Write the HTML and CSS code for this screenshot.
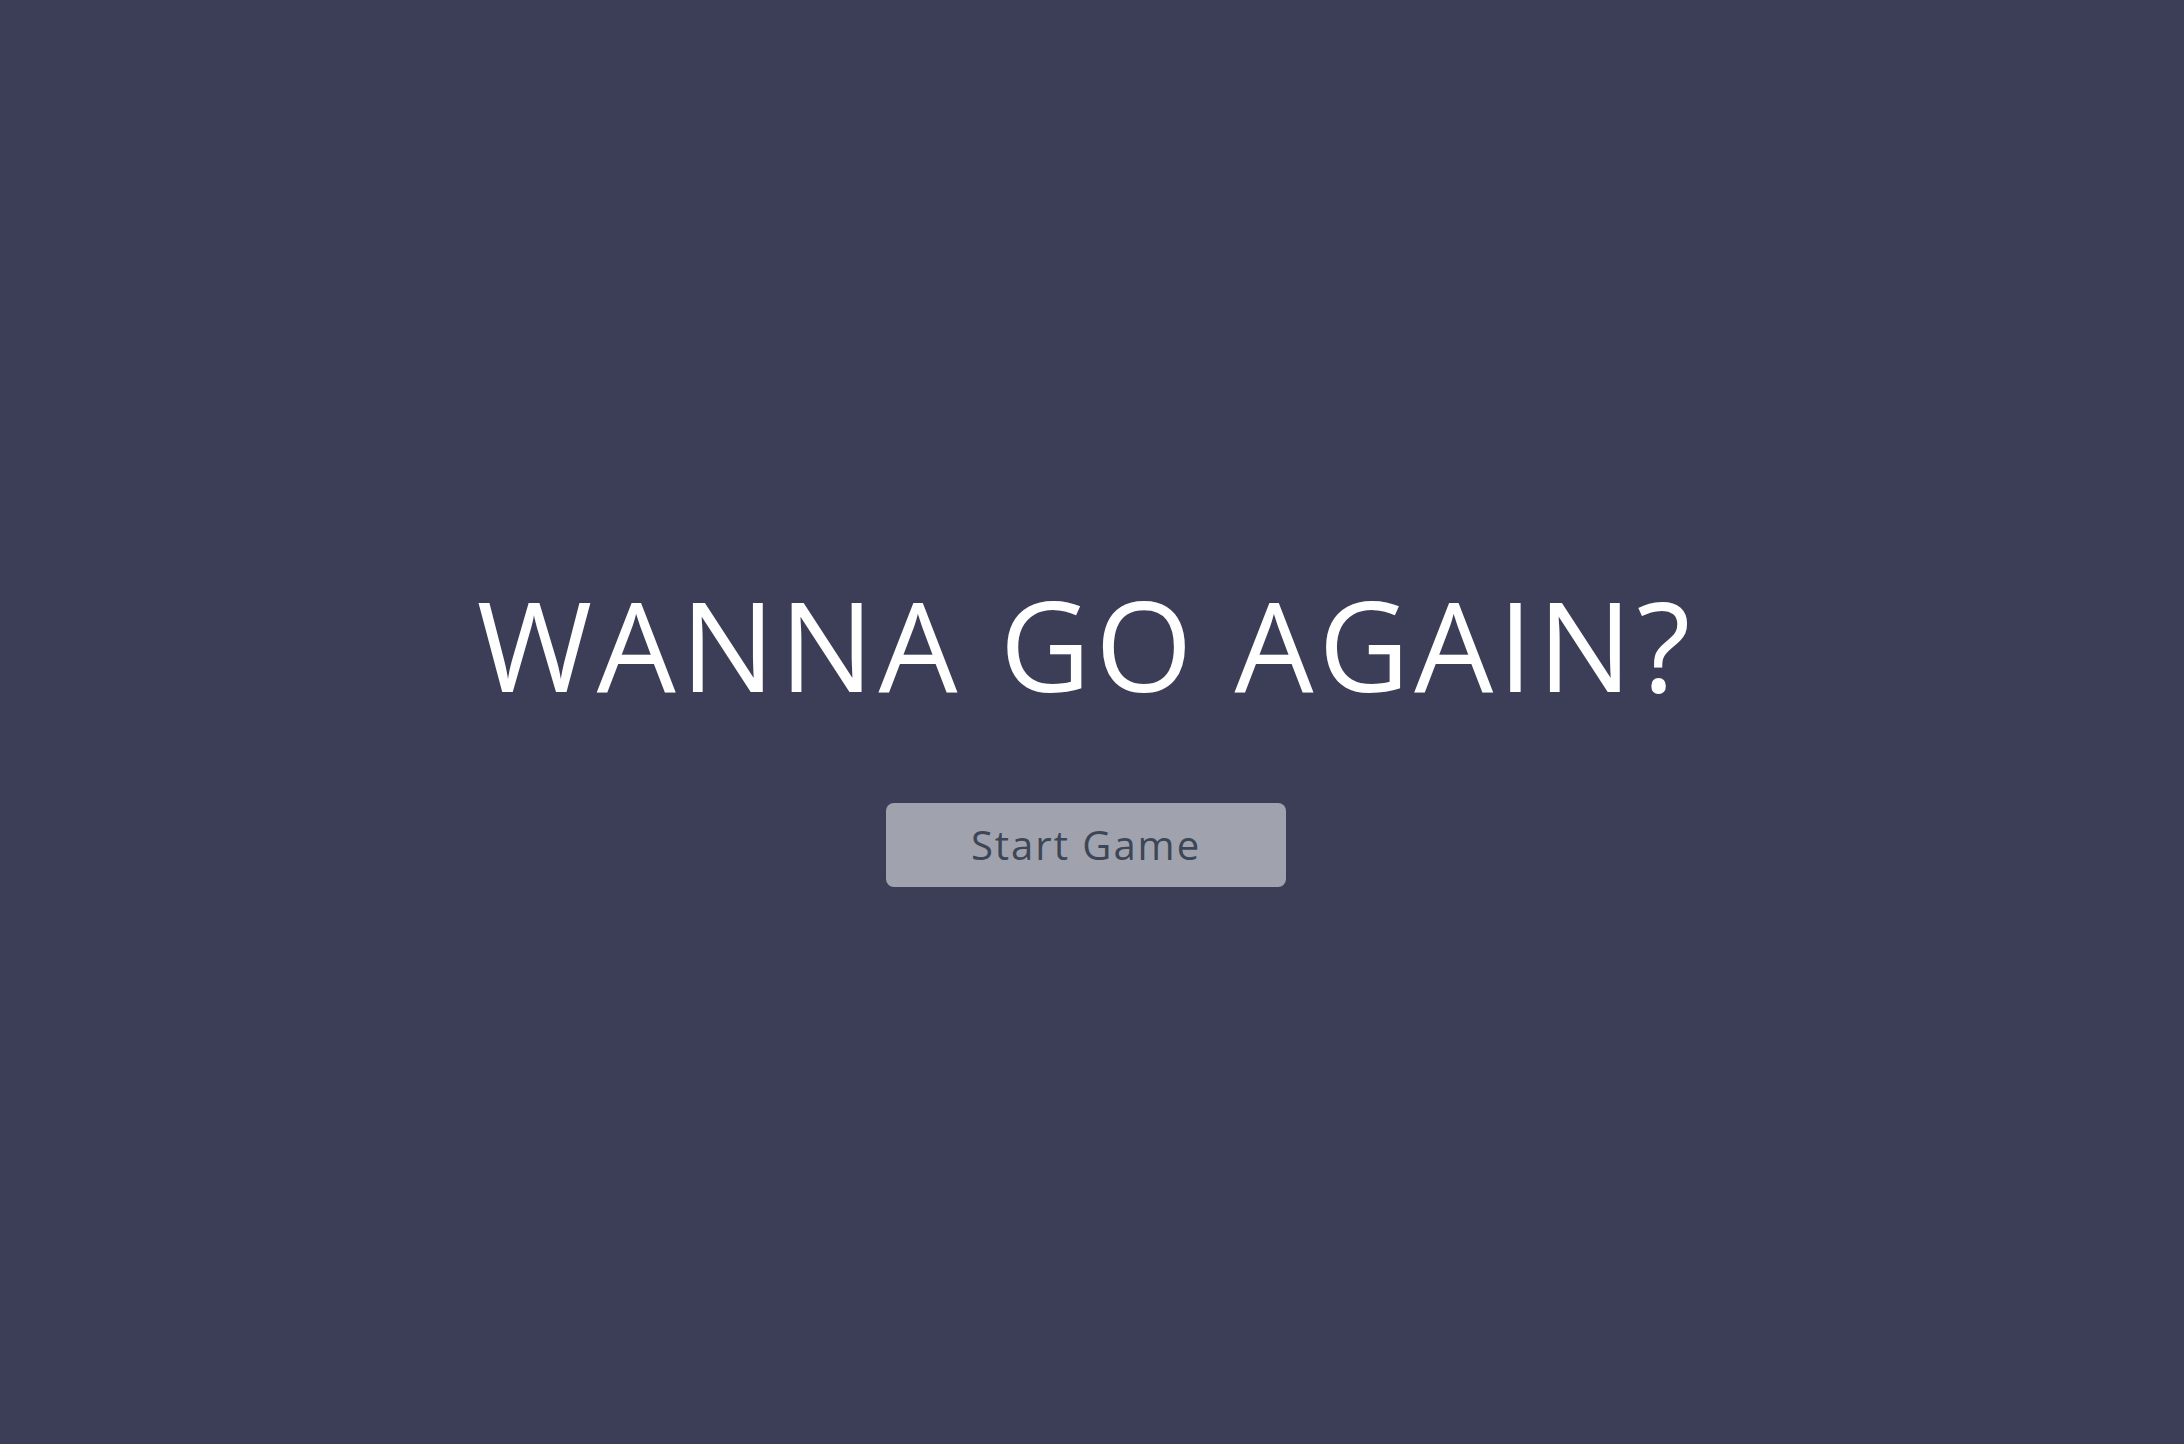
FILE: index.html
```html
<!DOCTYPE html>
<html lang="en">
<head>
<meta charset="utf-8">
<title>Wanna go again?</title>
<link rel="stylesheet" href="styles.css">
</head>
<body>
<main class="screen">
  <h1 class="title">WANNA GO AGAIN?</h1>
  <button class="start-btn" type="button">Start Game</button>
</main>
</body>
</html>
```
FILE: styles.css
```css
html, body {
  margin: 0;
  padding: 0;
  height: 100%;
}
body {
  background: #3b3e56;
  font-family: "Open Sans", "Liberation Sans", sans-serif;
}
.screen {
  height: 100%;
  display: flex;
  flex-direction: column;
  align-items: center;
  justify-content: center;
  padding: 11px 12px 0 0;
  box-sizing: border-box;
}
.title {
  margin: 0 0 84px 0;
  font-size: 125px;
  line-height: 150px;
  font-weight: 500;
  letter-spacing: 4.8px;
  color: #ffffff;
  white-space: nowrap;
}
.start-btn {
  width: 400px;
  height: 84px;
  border: none;
  border-radius: 8px;
  background: #a0a3ad;
  color: #3c4656;
  font-family: "Open Sans", "Liberation Sans", sans-serif;
  font-size: 40px;
  letter-spacing: 2px;
  padding: 0;
  cursor: pointer;
}
```
